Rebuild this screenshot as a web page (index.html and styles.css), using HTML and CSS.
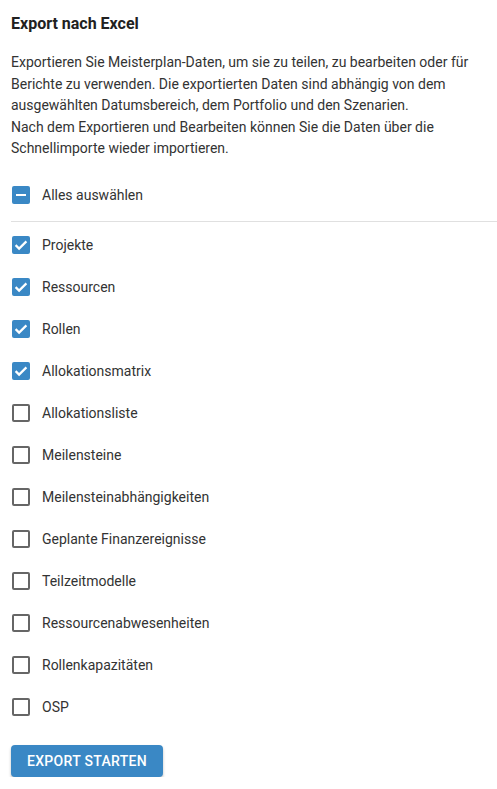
FILE: index.html
```html
<!DOCTYPE html>
<html lang="de">
<head>
<meta charset="utf-8">
<link rel="stylesheet" href="styles.css">
</head>
<body>
<div class="panel">
  <h1 class="title">Export nach Excel</h1>
  <p class="desc">Exportieren Sie Meisterplan-Daten, um sie zu teilen, zu bearbeiten oder für Berichte zu verwenden. Die exportierten Daten sind abhängig von dem ausgewählten Datumsbereich, dem Portfolio und den Szenarien.<br>Nach dem Exportieren und Bearbeiten können Sie die Daten über die Schnellimporte wieder importieren.</p>
  <div class="row">
    <span class="box on"><svg viewBox="0 0 18 18" width="18" height="18"><rect x="4" y="8" width="10" height="2" fill="#fff"/></svg></span>
    <span class="label">Alles auswählen</span>
  </div>
  <div class="divider"></div>
  <div class="list">
    <div class="row"><span class="box on"><svg viewBox="0 0 18 18" width="18" height="18"><path d="M3.6 9.1 L7.1 12.6 L14.4 5.4" stroke="#fff" stroke-width="2.2" fill="none"/></svg></span><span class="label">Projekte</span></div>
    <div class="row"><span class="box on"><svg viewBox="0 0 18 18" width="18" height="18"><path d="M3.6 9.1 L7.1 12.6 L14.4 5.4" stroke="#fff" stroke-width="2.2" fill="none"/></svg></span><span class="label">Ressourcen</span></div>
    <div class="row"><span class="box on"><svg viewBox="0 0 18 18" width="18" height="18"><path d="M3.6 9.1 L7.1 12.6 L14.4 5.4" stroke="#fff" stroke-width="2.2" fill="none"/></svg></span><span class="label">Rollen</span></div>
    <div class="row"><span class="box on"><svg viewBox="0 0 18 18" width="18" height="18"><path d="M3.6 9.1 L7.1 12.6 L14.4 5.4" stroke="#fff" stroke-width="2.2" fill="none"/></svg></span><span class="label">Allokationsmatrix</span></div>
    <div class="row"><span class="box"></span><span class="label">Allokationsliste</span></div>
    <div class="row"><span class="box"></span><span class="label">Meilensteine</span></div>
    <div class="row"><span class="box"></span><span class="label">Meilensteinabhängigkeiten</span></div>
    <div class="row"><span class="box"></span><span class="label">Geplante Finanzereignisse</span></div>
    <div class="row"><span class="box"></span><span class="label">Teilzeitmodelle</span></div>
    <div class="row"><span class="box"></span><span class="label">Ressourcenabwesenheiten</span></div>
    <div class="row"><span class="box"></span><span class="label">Rollenkapazitäten</span></div>
    <div class="row"><span class="box"></span><span class="label">OSP</span></div>
  </div>
  <button class="btn">EXPORT STARTEN</button>
</div>
</body>
</html>
```
FILE: styles.css
```css
html, body {
  margin: 0;
  padding: 0;
  background: #fff;
}
body {
  font-family: Roboto, "Liberation Sans", sans-serif;
  color: #212121;
}
.panel {
  padding: 13px 0 0 11px;
}
.title {
  margin: 0;
  font-size: 16px;
  font-weight: 700;
  line-height: 21px;
  color: #212121;
}
.desc {
  margin: 18px 10px 0 0;
  font-size: 14px;
  line-height: 21.5px;
  color: #333;
}
.row {
  display: flex;
  align-items: center;
  height: 42px;
}
.desc + .row {
  margin-top: 14px;
}
.box {
  box-sizing: border-box;
  width: 18px;
  height: 18px;
  margin-left: 1px;
  border: 2px solid #666;
  border-radius: 2px;
  flex: none;
}
.box.on {
  border: none;
  background: #3a88c5;
}
.box svg {
  display: block;
}
.label {
  margin-left: 12px;
  font-size: 14px;
  color: #333;
}
.divider {
  height: 1px;
  background: #e0e0e0;
  margin: 5px 0 2px 0;
}
.btn {
  margin-top: 17px;
  height: 32px;
  padding: 0 16px;
  border: none;
  border-radius: 4px;
  background: #3a88c5;
  color: #fff;
  font-family: Roboto, "Liberation Sans", sans-serif;
  font-size: 14px;
  font-weight: 500;
  letter-spacing: 0.3px;
  box-shadow: 0 2px 3px rgba(0,0,0,0.25);
}
```
